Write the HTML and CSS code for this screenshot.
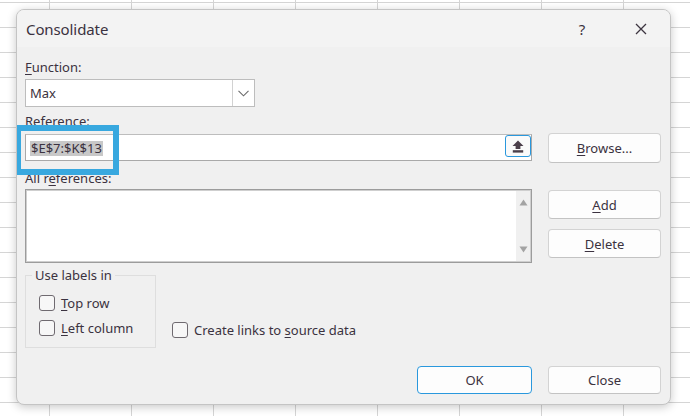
FILE: index.html
```html
<!DOCTYPE html>
<html>
<head>
<meta charset="utf-8">
<link rel="stylesheet" href="styles.css">
</head>
<body>
<div class="dialog">
  <div class="titlebar">
    <span class="title">Consolidate</span>
    <span class="help">?</span>
    <span class="close"><svg width="12" height="12" viewBox="0 0 12 12"><path d="M1 1 L11 11 M11 1 L1 11" stroke="#3d3540" stroke-width="1.3" fill="none"/></svg></span>
  </div>
  <div class="content">
    <div class="label label-function"><u>F</u>unction:</div>
    <div class="select">
      <span class="select-value">Max</span>
      <span class="select-arrow"><svg width="11" height="7" viewBox="0 0 11 7"><path d="M0.5 0.8 L5.5 5.8 L10.5 0.8" stroke="#6b6b6b" stroke-width="1.1" fill="none"/></svg></span>
    </div>
    <div class="label label-ref"><u>R</u>eference:</div>
    <div class="row row-ref">
      <div class="input">
        <span class="sel-text">$E$7:$K$13</span>
        <span class="collapse-btn"><svg width="12" height="13" viewBox="0 0 12 13"><path d="M6 0.5 L0.5 6 L3.6 6 L3.6 9 L8.4 9 L8.4 6 L11.5 6 Z" fill="#4b3f4a"/><rect x="0.8" y="10.2" width="10.4" height="2.4" fill="#4b3f4a"/></svg></span>
        <span class="highlight"></span>
      </div>
      <div class="btn btn-browse"><u>B</u>rowse...</div>
    </div>
    <div class="label label-all">All r<u>e</u>ferences:</div>
    <div class="row row-list">
      <div class="listbox">
        <div class="list-area"></div>
        <div class="scrollbar">
          <svg width="9" height="7" viewBox="0 0 9 7"><path d="M4.5 0.5 L8.5 6.5 L0.5 6.5 Z" fill="#a3a3a3"/></svg>
          <svg width="9" height="7" viewBox="0 0 9 7"><path d="M0.5 0.5 L8.5 0.5 L4.5 6.5 Z" fill="#a3a3a3"/></svg>
        </div>
      </div>
      <div class="side-buttons">
        <div class="btn btn-add"><u>A</u>dd</div>
        <div class="btn btn-delete"><u>D</u>elete</div>
      </div>
    </div>
    <div class="row row-options">
      <div class="group">
        <span class="legend">Use labels in</span>
        <label class="check check-first"><span class="box"></span><span><u>T</u>op row</span></label>
        <label class="check check-second"><span class="box"></span><span><u>L</u>eft column</span></label>
      </div>
      <label class="check check-links"><span class="box"></span><span>Create links to <u>s</u>ource data</span></label>
    </div>
    <div class="row row-actions">
      <div class="btn btn-ok">OK</div>
      <div class="btn btn-close">Close</div>
    </div>
  </div>
</div>
</body>
</html>
```
FILE: styles.css
```css
html, body {
  margin: 0;
  height: 416px;
  overflow: hidden;
}
body {
  padding: 9px 0 0 16px;
  box-sizing: border-box;
  background-color: #ffffff;
  background-image:
    linear-gradient(to right, #d5d5d5 1px, transparent 1px),
    linear-gradient(to bottom, #d5d5d5 1px, transparent 1px);
  background-size: 82px 25px;
  background-position: 49px 2px;
  font-family: "Noto Sans", "Open Sans", sans-serif;
  font-size: 13px;
  color: #3b3240;
}
u { text-decoration-thickness: 1px; text-underline-offset: 2px; }

.dialog {
  width: 655px;
  height: 396px;
  box-sizing: border-box;
  border: 1px solid #c4c4c4;
  border-radius: 8px;
  background: #f0f0f0;
  box-shadow: 0 2px 10px rgba(0,0,0,0.22);
  overflow: hidden;
}
.titlebar {
  height: 37px;
  display: flex;
  align-items: center;
  padding: 0 14px 0 9px;
  background: #f3f3f3;
}
.title {
  font-size: 15px;
  letter-spacing: -0.1px;
  padding-top: 1px;
}
.help {
  margin-left: auto;
  width: 20px;
  text-align: center;
  font-size: 15px;
  padding-top: 1px;
}
.close {
  margin-left: 34px;
  width: 30px;
  height: 20px;
  display: flex;
  align-items: center;
  justify-content: center;
}
.content {
  padding: 12px 9px 0 8px;
}
.label {
  height: 16px;
  line-height: 16px;
}
.label-ref { margin-top: 6px; }
.label-all { margin-top: 7px; position: relative; z-index: 0; }
.select {
  margin-top: 4px;
  width: 230px;
  height: 28px;
  box-sizing: border-box;
  border: 1px solid #bdbdbd;
  background: #ffffff;
  display: flex;
  align-items: center;
}
.select-value {
  flex: 1;
  padding-left: 4px;
}
.select-arrow {
  width: 21px;
  height: 26px;
  border-left: 1px solid #d2d2d2;
  display: flex;
  align-items: center;
  justify-content: center;
}
.row {
  display: flex;
  gap: 16px;
}
.row-ref {
  margin-top: 4px;
  height: 30px;
}
.input {
  position: relative;
  margin-top: 1px;
  width: 507px;
  height: 27px;
  box-sizing: border-box;
  border: 1px solid #a9a9a9;
  border-top-color: #bdbdbd;
  background: #ffffff;
  display: flex;
  align-items: flex-start;
}
.sel-text {
  margin: 6px 0 0 4px;
  padding: 0 1px;
  height: 15px;
  line-height: 15px;
  background: #c8c8c8;
  flex: none;
}
.collapse-btn {
  margin-left: auto;
  width: 26px;
  height: 22px;
  box-sizing: border-box;
  border: 1px solid #2a98dd;
  border-radius: 3px;
  display: flex;
  align-items: center;
  justify-content: center;
  background: #fafafa;
}
.highlight {
  position: absolute;
  left: -11px;
  top: -10px;
  width: 104px;
  height: 50px;
  box-sizing: border-box;
  border: 6px solid #38a8df;
  z-index: 2;
}
.btn {
  width: 113px;
  box-sizing: border-box;
  background: #fdfdfd;
  border: 1px solid #d3d3d3;
  border-bottom-color: #c3c3c3;
  border-radius: 4px;
  display: flex;
  align-items: center;
  justify-content: center;
}
.btn-browse { height: 30px; }
.row-list { margin-top: 3px; height: 74px; }
.listbox {
  width: 507px;
  height: 74px;
  box-sizing: border-box;
  border: 1px solid #9c9c9c;
  box-shadow: inset 0 0 0 1px #cfcfcf;
  background: #ffffff;
  display: flex;
  padding: 1px;
}
.list-area { flex: 1; }
.scrollbar {
  width: 14px;
  background: #f0f0f0;
  display: flex;
  flex-direction: column;
  align-items: center;
  justify-content: space-between;
  padding: 8px 0 8px;
}
.side-buttons {
  display: flex;
  flex-direction: column;
  gap: 10px;
  padding-top: 1px;
}
.btn-add, .btn-delete { height: 29px; }
.row-options {
  margin-top: 12px;
  align-items: flex-end;
}
.group {
  width: 131px;
  height: 73px;
  box-sizing: border-box;
  border: 1px solid #dedede;
  padding-left: 13px;
}
.legend {
  display: block;
  width: fit-content;
  margin: -9px 0 0 -7px;
  padding: 0 3px;
  line-height: 16px;
  background: #f0f0f0;
}
.check {
  display: flex;
  align-items: center;
  height: 20px;
  gap: 6px;
  white-space: nowrap;
}
.check-first { margin-top: 10px; }
.check-second { margin-top: 5px; }
.check-links { margin-bottom: 8px; }
.box {
  width: 16px;
  height: 16px;
  box-sizing: border-box;
  border: 1px solid #6f6a70;
  border-radius: 3px;
  background: #f7f7f7;
  flex: none;
}
.row-actions {
  margin-top: 18px;
  justify-content: flex-end;
}
.btn-ok {
  width: 115px;
  height: 28px;
  border: 1px solid #2a98dd;
}
.btn-close { height: 28px; }
```
